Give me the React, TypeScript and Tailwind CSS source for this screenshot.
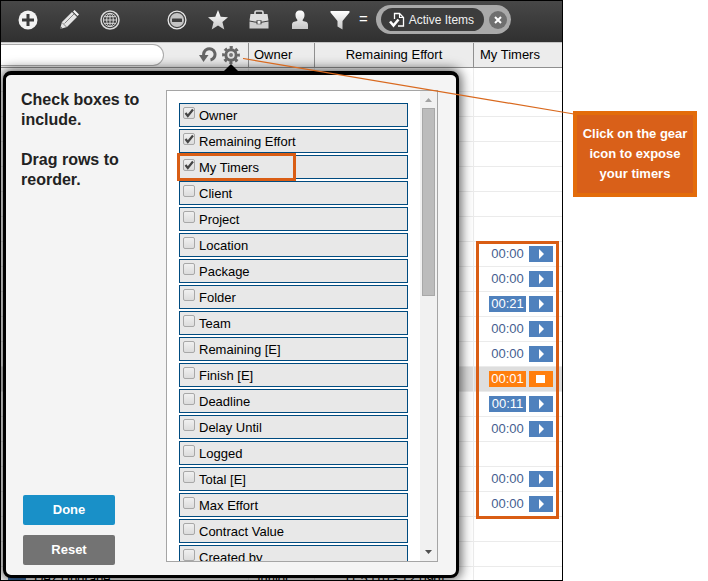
import React, { useState } from 'react'

const FIELDS = [
  'Owner',
  'Remaining Effort',
  'My Timers',
  'Client',
  'Project',
  'Location',
  'Package',
  'Folder',
  'Team',
  'Remaining [E]',
  'Finish [E]',
  'Deadline',
  'Delay Until',
  'Logged',
  'Total [E]',
  'Max Effort',
  'Contract Value',
  'Created by',
]

type Row = { time?: string; logged?: boolean; running?: boolean; name?: string; owner?: string; effort?: string }

const ROWS: Row[] = [
  {},
  {},
  {},
  {},
  {},
  {},
  {},
  { time: '00:00' },
  { time: '00:00' },
  { time: '00:21', logged: true },
  { time: '00:00' },
  { time: '00:00' },
  { time: '00:01', running: true },
  { time: '00:11', logged: true },
  { time: '00:00' },
  {},
  { time: '00:00' },
  { time: '00:00' },
  {},
  {},
  { name: 'Dez Upgrade', owner: 'Junior', effort: '11.5 [10 - 12.09d]' },
]

const COLS = 'grid grid-cols-[minmax(0,1fr)_66px_159px_88px]'

function ToolButton({ label, className, children }: { label: string; className: string; children: React.ReactNode }) {
  return (
    <button type="button" aria-label={label} className={className}>
      <svg viewBox="0 0 20 20" className="h-5 w-5">
        {children}
      </svg>
    </button>
  )
}

function Toolbar() {
  return (
    <div className="flex h-[41px] shrink-0 items-center bg-linear-to-b from-[#484848] to-[#303030] pb-1 pl-[17px]">
      <svg className="absolute h-0 w-0" aria-hidden="true">
        <defs>
          <linearGradient id="silver" x1="0" y1="0" x2="0" y2="1">
            <stop offset="0" stopColor="#fff" />
            <stop offset="1" stopColor="#c6c6c6" />
          </linearGradient>
        </defs>
      </svg>
      <ToolButton label="Add" className="">
        <circle cx="10" cy="10" r="9.5" fill="#f2f2f2" />
        <path d="M10 4v12M4 10h12" stroke="#3b3b3b" strokeWidth="3" />
      </ToolButton>
      <ToolButton label="Edit" className="ml-[21px]">
        <path d="M1 19l2-7L13 2l5 5L8 17z" fill="#e4e4e4" />
        <path d="M14 1.500L15.500 0l4.500 4.500-1.500 1.500z" fill="#f5f5f5" />
        <path d="M5.500 13.500L15 4M3 12.500l4.500 4.500" stroke="#666" strokeWidth=".8" />
        <path d="M1 19l.8-2.400 1.600 1.600z" fill="#444" />
      </ToolButton>
      <ToolButton label="Web" className="ml-[21px]">
        <g fill="none" stroke="#d8d8d8" strokeWidth="1">
          <circle cx="10" cy="10" r="9" strokeWidth="1.500" />
          <circle cx="10" cy="10" r="6.700" />
          <ellipse cx="10" cy="10" rx="3.300" ry="6.700" />
          <path d="M10 3.300v13.400M3.300 10h13.400M4.300 6.700h11.400M4.300 13.300h11.400" />
        </g>
      </ToolButton>
      <ToolButton label="Remove" className="ml-[47px]">
        <circle cx="10" cy="10" r="8.900" fill="#444" stroke="#e8e8e8" strokeWidth="1.300" />
        <circle cx="10" cy="10" r="7" fill="#c4c4c4" />
        <rect x="5" y="8.500" width="10" height="3.500" rx=".5" fill="#3f3f3f" />
      </ToolButton>
      <ToolButton label="Favourites" className="ml-[21px]">
        <path
          d="M10 0l2.700 6.700 7.300.5-5.600 4.700 1.900 7.600L10 15.400l-6.300 4.100 1.900-7.600L0 7.200l7.300-.5z"
          fill="url(#silver)"
        />
      </ToolButton>
      <ToolButton label="Projects" className="ml-[21px]">
        <path d="M6 4.500V2.500Q6 1 7.500 1h5Q14 1 14 2.500v2" fill="none" stroke="#d8d8d8" strokeWidth="1.700" />
        <path d="M1.500 4h17l1 6.500-7 1.300V10.200h-5v1.600l-7-1.300z" fill="#dcdcdc" />
        <path d="M.5 11.500l7 1.300v1.500h5v-1.500l7-1.300v7H.5z" fill="#cfcfcf" />
        <rect x="8.500" y="10.800" width="3" height="3" fill="#ededed" />
      </ToolButton>
      <ToolButton label="People" className="ml-[21px]">
        <path
          d="M10 .5c3.300 0 4.500 2 4.500 4.500 0 2-.7 3.500-1.800 4.700v1.300c3.300.4 5.300 1.200 5.300 4V19H2v-4c0-2.800 2-3.600 5.300-4V9.700C6.200 8.500 5.500 7 5.500 5 5.500 2.500 6.700.5 10 .5z"
          fill="url(#silver)"
        />
      </ToolButton>
      <ToolButton label="Filter" className="ml-[20px]">
        <path d="M.5 1h19v1.500L12.500 11v8.500l-5-3V11L.5 2.500z" fill="url(#silver)" />
      </ToolButton>
      <span className="ml-[9px] text-[15px] text-white">=</span>
      <div className="ml-2 flex h-[29px] items-center rounded-full bg-[#a9a9a9] pr-[4px] pl-[5px]">
        <span className="flex h-[23px] items-center gap-1 rounded-full bg-[#3c3c3c] pr-[10px] pl-2 text-xs text-[#f0f0f0]">
          <svg viewBox="0 0 16 16" className="h-4 w-4" fill="none" stroke="#fff">
            <path d="M5.500 7V1.500h5l4 4v8.500H9" strokeWidth="1.300" />
            <path d="M10.500 1.500v4h4" strokeWidth="1.100" />
            <path d="M1 9.500l3.500 4L9.500 7.500" strokeWidth="2.600" />
          </svg>
          Active Items
        </span>
        <button
          type="button"
          aria-label="Clear filter"
          className="ml-[5px] flex h-[18px] w-[18px] items-center justify-center rounded-full bg-[#6f6f6f]"
        >
          <svg viewBox="0 0 8 8" className="h-2 w-2" stroke="#fff" strokeWidth="2">
            <path d="M1 1l6 6M7 1L1 7" />
          </svg>
        </button>
      </div>
    </div>
  )
}

function HeaderRow() {
  return (
    <div className={`${COLS} h-[26px] shrink-0 border-t border-b border-t-[#c4c4c4] border-b-[#8f8f8f] bg-[#ececec] text-[13px]`}>
      <div className="flex items-center border-r border-[#8f8f8f] pr-2">
        <input
          type="text"
          aria-label="Search"
          className="h-[22px] min-w-0 flex-1 rounded-r-full border border-l-0 border-[#aaa] bg-white px-2 outline-none"
        />
        <button type="button" aria-label="Undo" className="ml-[35px]">
          <svg viewBox="0 0 18 16" className="h-4 w-[18px]">
            <path d="M5 9.500A5.700 5.700 0 1 1 11.500 13" fill="none" stroke="#666" strokeWidth="3" />
            <path d="M0 8h9.500L4.500 15z" fill="#666" />
          </svg>
        </button>
        <button type="button" aria-label="Choose columns" className="ml-[5px]">
          <svg viewBox="0 0 18 18" className="h-[18px] w-[18px]">
            <circle cx="9" cy="9" r="5.200" fill="#e4e4e4" stroke="#686868" strokeWidth="3" />
            <circle cx="9" cy="9" r="7.500" fill="none" stroke="#686868" strokeWidth="2.800" strokeDasharray="3.1 2.790" strokeDashoffset="1.550" />
            <circle cx="9" cy="9" r="2" fill="#777" />
          </svg>
        </button>
      </div>
      <div className="flex items-center border-r border-[#8f8f8f] pl-[5px]">Owner</div>
      <div className="flex items-center justify-center border-r border-[#8f8f8f]">Remaining Effort</div>
      <div className="flex items-center pl-[6px]">My Timers</div>
    </div>
  )
}

function Timer({ row }: { row: Row }) {
  const box = row.running ? 'bg-[#ff7f0e] text-white' : row.logged ? 'bg-[#4f81bd] text-white' : 'text-[#45608f]'
  return (
    <div className="flex items-center justify-end gap-[3px] pr-[9px]">
      <span className={`flex h-4 w-[37px] items-center justify-center text-[13px] ${box}`}>{row.time}</span>
      <button
        type="button"
        aria-label={row.running ? 'Stop timer' : 'Start timer'}
        className={`flex h-4 w-6 items-center justify-center ${row.running ? 'bg-[#ff7f0e]' : 'bg-[#4f81bd]'}`}
      >
        <svg viewBox="0 0 10 10" className="h-[10px] w-[10px]" fill="#fff">
          {row.running ? <rect x="0" y="1" width="9" height="8" /> : <path d="M3 0l5 5-5 5z" />}
        </svg>
      </button>
    </div>
  )
}

function Body() {
  return (
    <div className="relative">
      {ROWS.map((row, i) => (
        <div
          key={i}
          className={`${COLS} h-[25px] border-b border-[#ebebeb] text-[13px] first:h-6 ${row.running ? 'bg-[#dedede]' : 'bg-white'}`}
        >
          <div className="flex items-center border-r border-[#ebebeb] pl-[7px]">
            {row.name && <span className="mr-2 h-4 w-[18px] bg-[#3c6ea8]" />}
            {row.name}
          </div>
          <div className="flex items-center border-r border-[#ebebeb] pl-[5px]">{row.owner}</div>
          <div className="flex items-center justify-center border-r border-[#ebebeb]">{row.effort}</div>
          {row.time ? <Timer row={row} /> : <div />}
        </div>
      ))}
      {/* frame round the timers */}
      <div className="pointer-events-none absolute top-[173px] right-[3px] h-[278px] w-[83px] border-3 border-[#d95d14]" />
    </div>
  )
}

function FieldRow({ label, checked, onToggle }: { label: string; checked: boolean; onToggle: () => void }) {
  return (
    <li className="relative h-6 border border-[#004b80] bg-[#e8e8e8]">
      <label className="flex h-full pl-[3px] text-[13px] leading-[23px]">
        <input
          type="checkbox"
          checked={checked}
          onChange={onToggle}
          className="peer mt-[3px] h-3 w-3 shrink-0 appearance-none rounded-[2px] border border-[#a8a8a8] bg-linear-to-b from-[#f0f0f0] to-[#dcdcdc]"
        />
        <svg viewBox="0 0 12 12" className="mt-[3px] -ml-3 hidden h-3 w-3 shrink-0 peer-checked:block">
          <path d="M2.500 6l2.300 3L10 2.500" fill="none" stroke="#444" strokeWidth="2.200" />
        </svg>
        <span className="ml-1">{label}</span>
      </label>
      {label === 'My Timers' && (
        <span className="pointer-events-none absolute -top-[3px] -left-[3px] h-7 w-[119px] border-3 border-[#d95d14]" />
      )}
    </li>
  )
}

function ColumnPicker() {
  const [shown, setShown] = useState(['Owner', 'Remaining Effort', 'My Timers'])

  const toggle = (field: string) => {
    setShown(shown.includes(field) ? shown.filter((f) => f !== field) : [...shown, field])
  }

  return (
    <div className="absolute top-[70px] right-[103px] bottom-[2px] left-[2px] flex rounded-lg border-[3px] border-t-4 border-black bg-[#f4f4f4] shadow-[0_0_12px_2px_rgba(0,0,0,0.65)]">
      <svg viewBox="0 0 18 9" className="absolute -top-[11px] right-[216px] h-[9px] w-[18px]">
        <path d="M0 9L9 0l9 9z" fill="#000" />
      </svg>
      <div className="flex w-[160px] shrink-0 flex-col pt-[15px] pr-5 pb-[10px] pl-[15px]">
        <p className="text-base leading-5 font-bold text-[#222]">
          Check boxes to include.
        </p>
        <p className="mt-5 text-base leading-5 font-bold text-[#222]">
          Drag rows to reorder.
        </p>
        <div className="mt-auto flex flex-col gap-[10px] pl-[2px] text-[13px] font-bold text-white">
          <button type="button" className="h-[30px] w-[92px] rounded-[2px] bg-[#1990c8]">
            Done
          </button>
          <button type="button" className="h-[30px] w-[92px] rounded-[2px] bg-[#737373]">
            Reset
          </button>
        </div>
      </div>
      <div className="mt-[15px] mr-[18px] mb-[13px] flex min-w-0 flex-1 border border-[#a5a5a5] bg-white">
        <ul className="flex min-w-0 flex-1 flex-col gap-[2px] overflow-hidden py-3 pr-3 pl-3 *:shrink-0">
          {FIELDS.map((field) => (
            <FieldRow key={field} label={field} checked={shown.includes(field)} onToggle={() => toggle(field)} />
          ))}
        </ul>
        <div className="flex w-[17px] shrink-0 flex-col items-center bg-[#f1f1f1]">
          <svg viewBox="0 0 17 17" className="h-[17px] w-[17px]">
            <path d="M5 11l3.500-4 3.500 4z" fill="#a3a3a3" />
          </svg>
          <div className="h-[188px] w-[13px] border border-[#a8a8a8] bg-[#bcbcbc]" />
          <svg viewBox="0 0 17 17" className="mt-auto h-[17px] w-[17px]">
            <path d="M5 6l3.500 4L12 6z" fill="#505050" />
          </svg>
        </div>
      </div>
    </div>
  )
}

export default function App() {
  return (
    <div className="relative flex h-screen overflow-hidden bg-white font-['Liberation_Sans',Arial,sans-serif] text-black">
      <main className="relative flex min-w-0 flex-1 flex-col overflow-hidden border border-black">
        <Toolbar />
        <HeaderRow />
        <Body />
        <ColumnPicker />
      </main>
      <aside className="w-[145px] shrink-0 pt-[111px] pr-[11px] pl-[10px]">
        <p className="flex h-[86px] items-center justify-center border-4 border-[#e36c0a] bg-[#d96019] px-1 text-center text-[13px] leading-5 font-bold text-white">
          Click on the gear icon to expose your timers
        </p>
      </aside>
      {/* leader line from the gear to the callout */}
      <svg viewBox="0 0 331 57" className="pointer-events-none absolute top-[58px] right-[134px] h-[57px] w-[331px]">
        <path d="M0 .5L331 56" stroke="#d9691e" strokeWidth="1.200" />
      </svg>
    </div>
  )
}
